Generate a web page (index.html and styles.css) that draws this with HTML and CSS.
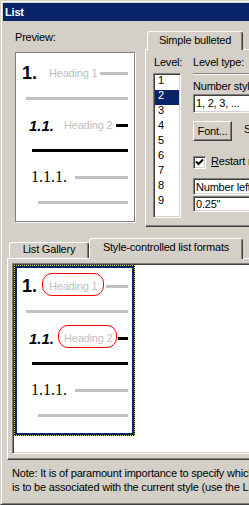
FILE: index.html
```html
<!DOCTYPE html>
<html lang="en">

<head>
    <meta charset="UTF-8">
    <meta name="viewport" content="width=device-width, initial-scale=1.0">
    <title>List</title>
    <link rel="stylesheet" href="styles.css">
</head>

<body>
    <div class="window">
        <div class="titlebar">List</div>
        <div class="client">

            <div class="top-section">
                <!-- preview of the current list style -->
                <div class="preview-col">
                    <div class="label">Preview:</div>
                    <div class="preview">
                        <div class="sample">
                            <div class="row row1"><span class="num n1">1.</span><span class="heading">Heading 1</span><span class="dash grey"></span></div>
                            <div class="rule grey r1"></div>
                            <div class="row row2"><span class="num n2">1.1.</span><span class="heading">Heading 2</span><span class="dash black"></span></div>
                            <div class="rule black r2"></div>
                            <div class="row row3"><span class="num n3">1.1.1.</span><span class="dash grey"></span></div>
                            <div class="rule grey r3"></div>
                        </div>
                    </div>
                </div>

                <!-- level settings -->
                <div class="tabctl top-tabs">
                    <div class="tabstrip">
                        <div class="tab active">Simple bulleted</div>
                    </div>
                    <div class="tabpanel">
                        <div class="level-col">
                            <div class="label">Level:</div>
                            <div class="listbox sunken">
                                <div class="lb-item">1</div>
                                <div class="lb-item selected">2</div>
                                <div class="lb-item">3</div>
                                <div class="lb-item">4</div>
                                <div class="lb-item">5</div>
                                <div class="lb-item">6</div>
                                <div class="lb-item">7</div>
                                <div class="lb-item">8</div>
                                <div class="lb-item">9</div>
                            </div>
                        </div>
                        <div class="props-col">
                            <div class="label">Level type:</div>
                            <div class="etched"></div>
                            <div class="label style-label">Number style:</div>
                            <div class="combo sunken">1, 2, 3, ...</div>
                            <div class="btn-row">
                                <button type="button" class="btn">Font...</button>
                                <span class="label start-label">Start at:</span>
                            </div>
                            <div class="check-row">
                                <span class="checkbox sunken">
                                    <svg width="9" height="9" viewBox="0 0 9 9"><path d="M1 3.5 L3.5 6 L8 1.5" fill="none" stroke="#000" stroke-width="2"/></svg>
                                </span>
                                <span class="label"><u>R</u>estart numbering after:</span>
                            </div>
                            <div class="field sunken first">Number left aligned</div>
                            <div class="field sunken second">0.25"</div>
                        </div>
                    </div>
                </div>
            </div>

            <!-- style-controlled formats -->
            <div class="tabctl bottom-tabs">
                <div class="tabstrip">
                    <div class="tab gallery">List Gallery</div>
                    <div class="tab active styled">Style-controlled list formats</div>
                </div>
                <div class="tabpanel">
                    <div class="listview sunken">
                        <div class="focus">
                            <div class="card">
                                <div class="sample">
                                    <div class="row row1"><span class="num n1">1.</span><span class="heading oval">Heading 1</span><span class="dash grey"></span></div>
                                    <div class="rule grey r1"></div>
                                    <div class="row row2"><span class="num n2">1.1.</span><span class="heading oval">Heading 2</span><span class="dash black"></span></div>
                                    <div class="rule black r2"></div>
                                    <div class="row row3"><span class="num n3">1.1.1.</span><span class="dash grey"></span></div>
                                    <div class="rule grey r3"></div>
                                </div>
                            </div>
                        </div>
                    </div>
                </div>
            </div>

            <div class="note">
                <div>Note: It is of paramount importance to specify which list format</div>
                <div>is to be associated with the current style (use the List Gallery tab).</div>
            </div>
        </div>
    </div>
</body>

</html>
```

FILE: styles.css
```css
html,
body {
    margin: 0;
    padding: 0;
    width: 249px;
    height: 505px;
    overflow: hidden;
    background-color: #d4d0c8;
}

body {
    font-family: "Liberation Sans", Arial, sans-serif;
    font-size: 11px;
    letter-spacing: -0.2px; /* Tahoma風に少し詰める */
    color: #000;
}

.window {
    box-sizing: border-box;
    width: 420px;
    height: 505px;
    padding: 2px 0 2px 2px;
    border-top: 1px solid #d4d0c8;
    border-left: 1px solid #d4d0c8;
    border-bottom: 1px solid #404040;
    box-shadow: inset 1px 1px 0 #fff, inset 0 -1px 0 #808080;
    background-color: #d4d0c8;
}

.titlebar {
    height: 18px;
    line-height: 18px;
    padding-left: 2px;
    background-color: #0a246a;
    color: #fff;
    font-weight: bold;
}

.client {
    padding-top: 10px;
}

.label {
    line-height: 13px;
    white-space: nowrap;
}

/* 上段 */
.top-section {
    display: flex;
    align-items: flex-start;
}

.preview-col {
    margin-left: 12px;
    width: 120px;
}

.preview {
    box-sizing: border-box;
    width: 120px;
    height: 170px;
    margin-top: 8px;
    border: 1px solid #808080;
    box-shadow: 1px 1px 0 #fff;
    background-color: #fff;
}

/* sample list drawing */
.sample {
    width: 118px;
    padding-top: 10px;
}

.row {
    display: flex;
    align-items: center;
    height: 20px;
}

.row2,
.row3 {
    margin-top: 15px;
}

.num {
    white-space: nowrap;
    letter-spacing: normal;
}

.n1 {
    margin-left: 6px;
    width: 27px;
    font-size: 18px;
    line-height: 18px;
    font-weight: bold;
}

.n2 {
    margin-left: 13px;
    width: 35px;
    font-size: 15px;
    line-height: 15px;
    font-weight: bold;
    font-style: italic;
}

.n3 {
    margin-left: 15px;
    width: 44px;
    font-family: "Liberation Serif", "Times New Roman", serif;
    font-size: 16px;
    line-height: 16px;
}

.heading {
    position: relative;
    line-height: 11px;
    color: #c0c0c0;
    white-space: nowrap;
}

.row1 .heading {
    width: 47px;
}

.row2 .heading {
    width: 48px;
}

.dash {
    flex: 1;
    height: 3px;
    margin-left: 4px;
    margin-right: 6px;
}

.row3 .dash {
    margin-left: 0;
}

.rule {
    height: 3px;
    margin-top: 14px;
    margin-right: 6px;
}

.r1 {
    margin-left: 10px;
}

.r2 {
    margin-left: 16px;
}

.r3 {
    margin-left: 22px;
}

.grey {
    background-color: #c0c0c0;
}

.black {
    background-color: #000;
}

/* tab controls */
.tabstrip {
    display: flex;
    align-items: flex-end;
    padding-left: 2px;
}

.tab {
    position: relative;
    box-sizing: border-box;
    border: 1px solid;
    border-color: #fff #404040 transparent #fff;
    border-bottom: none;
    border-radius: 3px 3px 0 0;
    box-shadow: inset -1px 0 0 #808080;
    background-color: #d4d0c8;
    text-align: center;
    line-height: 13px;
    white-space: nowrap;
}

.tab.active {
    z-index: 1;
    margin-bottom: -1px;
}

.tabpanel {
    box-sizing: border-box;
    border: 1px solid;
    border-color: #fff #404040 #404040 #fff;
    box-shadow: inset -1px -1px 0 #808080;
}

.sunken {
    box-sizing: border-box;
    border: 1px solid;
    border-color: #808080 #fff #fff #808080;
    box-shadow: inset 1px 1px 0 #404040, inset -1px -1px 0 #d4d0c8;
    background-color: #fff;
}

/* 右上のタブ */
.top-tabs {
    margin-left: 10px;
}

.top-tabs .tab {
    width: 96px;
    height: 19px;
    padding-top: 2px;
}

.top-tabs .tabpanel {
    display: flex;
    gap: 12px;
    width: 260px;
    height: 178px;
    padding: 6px 0 0 7px;
}

.level-col {
    width: 28px;
}

.level-col .label {
    margin-left: 1px;
}

.listbox {
    height: 145px;
    margin-top: 4px;
    padding: 1px;
}

.lb-item {
    height: 15px;
    line-height: 11px;
    padding-left: 3px;
}

.lb-item.selected {
    background-color: #0a246a;
    color: #fff;
}

.props-col {
    flex: 1;
}

.etched {
    height: 0;
    margin-top: 4px;
    border-top: 1px solid #808080;
    border-bottom: 1px solid #fff;
}

.style-label {
    margin-top: 5px;
}

.combo {
    height: 19px;
    margin-top: 1px;
    padding: 2px 0 0 2px;
    line-height: 13px;
    white-space: nowrap;
}

.btn-row {
    display: flex;
    align-items: flex-start;
    margin-top: 8px;
}

.btn {
    box-sizing: border-box;
    width: 39px;
    height: 20px;
    padding: 0;
    border: 1px solid;
    border-color: #fff #404040 #404040 #fff;
    box-shadow: inset -1px -1px 0 #808080;
    background-color: #d4d0c8;
    font-family: inherit;
    font-size: 11px;
    letter-spacing: inherit;
    color: #000;
}

.start-label {
    margin-left: 12px;
    margin-top: 2px;
}

.check-row {
    display: flex;
    align-items: flex-start;
    margin-top: 14px;
}

.checkbox {
    display: flex;
    align-items: center;
    justify-content: center;
    width: 13px;
    height: 13px;
    margin-top: 1px;
    margin-right: 5px;
}

.field {
    padding-left: 2px;
    white-space: nowrap;
}

.field.first {
    height: 17px;
    margin-top: 9px;
    padding-top: 2px;
    line-height: 12px;
}

.field.second {
    height: 16px;
    margin-top: 1px;
    padding-top: 2px;
    line-height: 11px;
}

/* 下段のタブ */
.bottom-tabs {
    margin-top: 11px;
    margin-left: 4px;
}

.tab.gallery {
    width: 80px;
    height: 16px;
    padding-top: 0;
}

.tab.styled {
    width: 154px;
    height: 21px;
    padding-top: 2px;
}

.bottom-tabs .tabpanel {
    width: 380px;
    height: 202px;
    padding: 4px 0 0 4px;
}

.listview {
    width: 360px;
    height: 191px;
    padding: 1px;
}

.focus {
    box-sizing: border-box;
    width: 121px;
    height: 171px;
    border: 1px dotted #e8d860;
    background-color: #000;
}

.card {
    box-sizing: border-box;
    height: 100%;
    border: 2px solid #0a246a;
    background-color: #fff;
}

.card .sample {
    margin: -2px 0 0 -1px;
}

.oval::before {
    content: "";
    position: absolute;
    top: -8px;
    bottom: -4px;
    border: 1px solid #f00;
    border-radius: 10px;
}

.row1 .oval::before {
    left: -7px;
    right: -8px;
}

.row2 .oval::before {
    left: -6px;
    right: -5px;
}

.card .row1 .dash {
    margin-left: 10px;
}

.card .row2 .dash {
    margin-left: 6px;
}

.note {
    margin-top: 6px;
    margin-left: 9px;
    line-height: 14px;
    white-space: nowrap;
}
```
